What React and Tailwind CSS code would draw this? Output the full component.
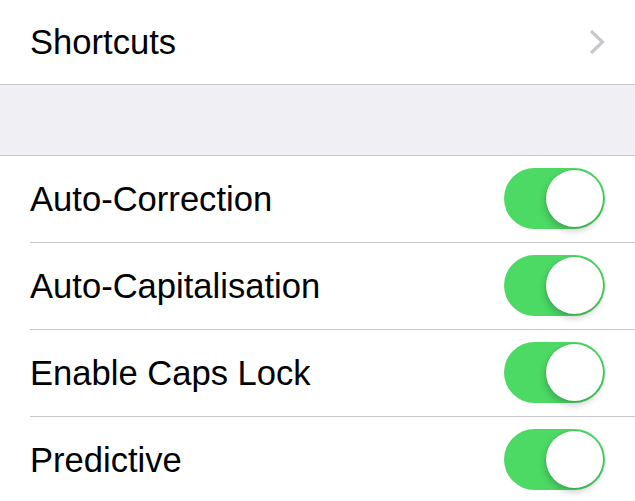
import React from 'react';

const ROWS = ['Auto-Correction', 'Auto-Capitalisation', 'Enable Caps Lock', 'Predictive'];

function Toggle() {
  return (
    <div className="relative -top-[1px] w-[101px] h-[61px] rounded-full bg-[#4cd964] shrink-0">
      <div className="absolute right-[2px] top-[2px] w-[57px] h-[57px] rounded-full bg-white shadow-[0_0_0_1px_rgba(0,0,0,0.06),-1px_4px_7px_rgba(0,0,0,0.2)]" />
    </div>
  );
}

function Chevron() {
  return (
    <svg width="16" height="26" viewBox="0 0 16 26" className="shrink-0">
      <path d="M2 2 L13.5 13 L2 24" fill="none" stroke="#c7c7cc" strokeWidth="3.2" />
    </svg>
  );
}

export default function App() {
  return (
    <div className="w-[635px] h-[501px] overflow-hidden bg-white text-black font-['Liberation_Sans',Arial,sans-serif]">
      {/* Shortcuts */}
      <div className="h-[84px] flex items-center justify-between pl-[30px] pr-[30px]">
        <span className="text-[34.6px] leading-none">Shortcuts</span>
        <Chevron />
      </div>

      {/* Section gap */}
      <div className="h-[72px] bg-[#efeff4] border-y border-[#c8c7cc]" />

      {/* Toggles */}
      <div className="pl-[30px]">
        {ROWS.map((label, i) => (
          <div
            key={label}
            className={`h-[87px] flex items-center justify-between pr-[30px] ${i < ROWS.length - 1 ? 'border-b border-[#c8c7cc]' : ''}`}
          >
            <span className="text-[34.6px] leading-none">{label}</span>
            <Toggle />
          </div>
        ))}
      </div>
    </div>
  );
}
